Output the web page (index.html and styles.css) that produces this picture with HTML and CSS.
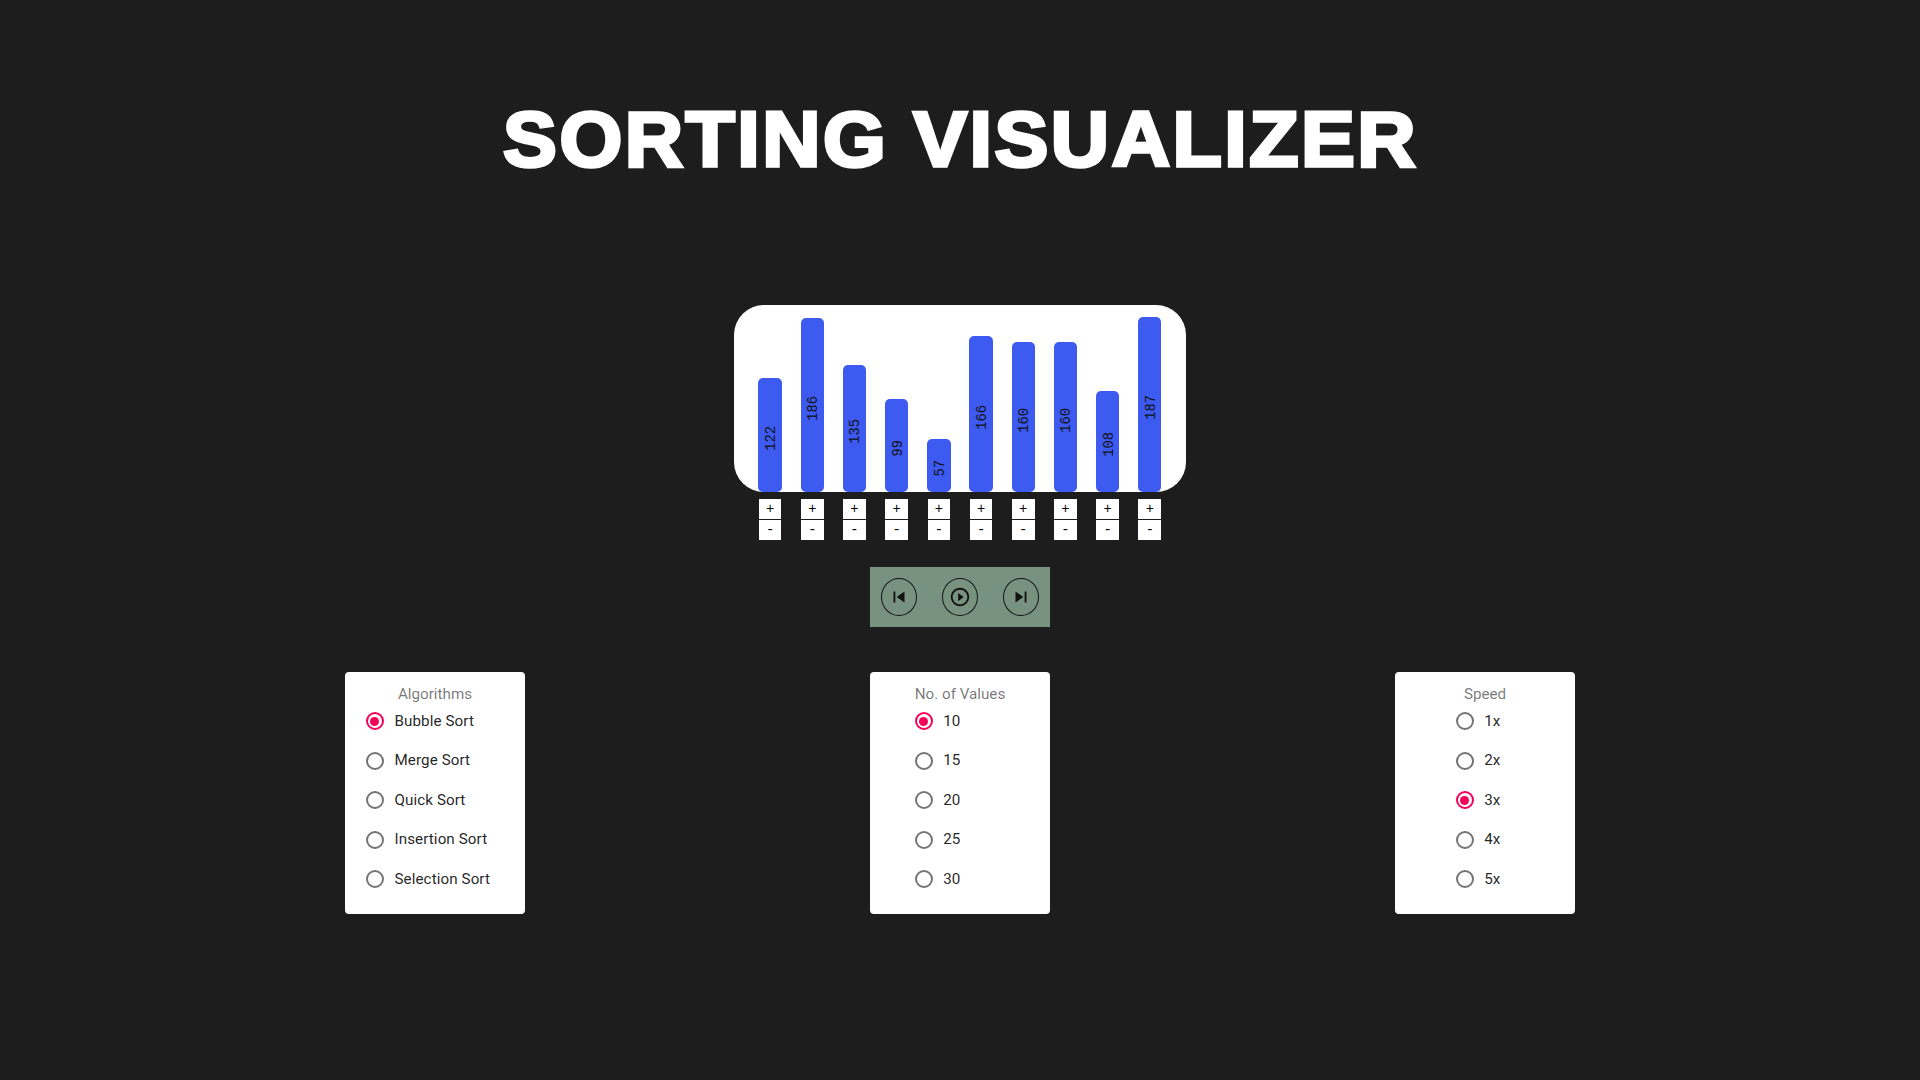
FILE: index.html
```html
<!DOCTYPE html>
<html lang="en">
<head>
<meta charset="utf-8">
<title>Sorting Visualizer</title>
<link rel="stylesheet" href="styles.css">
</head>
<body>
<main class="page">
  <h1 class="title">SORTING VISUALIZER</h1>
  <section class="chart">
    <div class="bar h122"><span class="val">122</span></div>
    <div class="bar h186"><span class="val">186</span></div>
    <div class="bar h135"><span class="val">135</span></div>
    <div class="bar h99"><span class="val">99</span></div>
    <div class="bar h57"><span class="val">57</span></div>
    <div class="bar h166"><span class="val">166</span></div>
    <div class="bar h160"><span class="val">160</span></div>
    <div class="bar h160"><span class="val">160</span></div>
    <div class="bar h108"><span class="val">108</span></div>
    <div class="bar h187"><span class="val">187</span></div>
  </section>
  <section class="steppers">
    <div class="stepper"><button class="step">+</button><button class="step">-</button></div>
    <div class="stepper"><button class="step">+</button><button class="step">-</button></div>
    <div class="stepper"><button class="step">+</button><button class="step">-</button></div>
    <div class="stepper"><button class="step">+</button><button class="step">-</button></div>
    <div class="stepper"><button class="step">+</button><button class="step">-</button></div>
    <div class="stepper"><button class="step">+</button><button class="step">-</button></div>
    <div class="stepper"><button class="step">+</button><button class="step">-</button></div>
    <div class="stepper"><button class="step">+</button><button class="step">-</button></div>
    <div class="stepper"><button class="step">+</button><button class="step">-</button></div>
    <div class="stepper"><button class="step">+</button><button class="step">-</button></div>
  </section>
  <section class="controls">
    <button class="ctl" aria-label="Previous"><svg viewBox="0 0 24 24" class="ico"><path d="M6 6h2v12H6zm3.5 6 8.5 6V6z"/></svg></button>
    <button class="ctl" aria-label="Play"><svg viewBox="0 0 24 24" class="ico play"><path d="M10 16.5l6-4.5-6-4.5v9zM12 2C6.48 2 2 6.48 2 12s4.48 10 10 10 10-4.48 10-10S17.52 2 12 2zm0 18c-4.41 0-8-3.59-8-8s3.59-8 8-8 8 3.59 8 8-3.59 8-8 8z"/></svg></button>
    <button class="ctl" aria-label="Next"><svg viewBox="0 0 24 24" class="ico"><path d="M6 18l8.5-6L6 6v12zM16 6v12h2V6h-2z"/></svg></button>
  </section>
  <section class="cards">
    <div class="card">
      <div class="form">
        <div class="legend">Algorithms</div>
        <div class="options">
          <label class="opt on"><span class="radio"></span>Bubble Sort</label>
          <label class="opt"><span class="radio"></span>Merge Sort</label>
          <label class="opt"><span class="radio"></span>Quick Sort</label>
          <label class="opt"><span class="radio"></span>Insertion Sort</label>
          <label class="opt"><span class="radio"></span>Selection Sort</label>
        </div>
      </div>
    </div>
    <div class="card">
      <div class="form">
        <div class="legend">No. of Values</div>
        <div class="options">
          <label class="opt on"><span class="radio"></span>10</label>
          <label class="opt"><span class="radio"></span>15</label>
          <label class="opt"><span class="radio"></span>20</label>
          <label class="opt"><span class="radio"></span>25</label>
          <label class="opt"><span class="radio"></span>30</label>
        </div>
      </div>
    </div>
    <div class="card">
      <div class="form">
        <div class="legend">Speed</div>
        <div class="options">
          <label class="opt"><span class="radio"></span>1x</label>
          <label class="opt"><span class="radio"></span>2x</label>
          <label class="opt on"><span class="radio"></span>3x</label>
          <label class="opt"><span class="radio"></span>4x</label>
          <label class="opt"><span class="radio"></span>5x</label>
        </div>
      </div>
    </div>
  </section>
</main>
</body>
</html>
```
FILE: styles.css
```css
* { box-sizing: border-box; }
html, body { margin: 0; height: 100%; }
body { background: #1d1d1d; font-family: Roboto, sans-serif; }
.page { display: flex; flex-direction: column; align-items: center; height: 1080px; padding-top: 97px; }
.title { margin: 0; height: 82px; padding-left: 2px; font: 900 77px/84px "Liberation Sans", Arial, sans-serif; color: #fff; -webkit-text-stroke: 3.4px #fff; letter-spacing: 2.4px; white-space: nowrap; transform: scaleX(1.048); }
.chart { margin-top: 126px; width: 452px; height: 187px; background: #fff; border-radius: 30px; padding: 0 24.4px; display: grid; grid-template-columns: repeat(10, 23.4px); column-gap: 18.8px; align-items: end; }
.bar { background: #3d5af1; border-radius: 5px; display: flex; align-items: center; justify-content: center; }
.h122 { height: 114px; } .h186 { height: 174px; } .h135 { height: 127px; } .h99 { height: 93px; } .h57 { height: 53px; }
.h166 { height: 156px; } .h160 { height: 150px; } .h108 { height: 101px; } .h187 { height: 175px; }
.val { writing-mode: vertical-rl; transform: translateX(2px) rotate(180deg); font: 13.8px/16px "Liberation Mono", monospace; color: #111; padding-bottom: 6px; }
.steppers { margin-top: 7px; width: 452px; padding: 0 24.4px; display: grid; grid-template-columns: repeat(10, 23.4px); column-gap: 18.8px; }
.stepper { display: flex; flex-direction: column; gap: 1px; align-items: stretch; padding: 0 .4px; }
.step { border: 0; padding: 2px 0 0; margin: 0; height: 20px; background: #fff; color: #000; font: 13.8px/18px "Liberation Mono", monospace; }
.controls { margin-top: 27px; width: 180px; height: 60px; background: #77937f; display: flex; align-items: center; justify-content: space-between; padding: 0 11px; }
.ctl { width: 36px; height: 38px; border: 1px solid #111; border-radius: 50%; background: transparent; padding: 0; display: flex; align-items: center; justify-content: center; }
.ico { width: 22px; height: 22px; fill: #111; display: block; flex: none; }
.cards { margin-top: 45px; width: 1230px; display: flex; justify-content: space-between; }
.card { width: 180px; height: 242px; background: #fff; border-radius: 4px; padding-top: 12px; display: flex; justify-content: center; align-items: flex-start; }
.form { width: fit-content; }
.legend { text-align: center; font-size: 15.2px; line-height: 20px; color: rgba(0,0,0,.54); white-space: nowrap; }
.options { display: flex; flex-direction: column; gap: 18.5px; margin-top: 6.5px; }
.opt { display: flex; align-items: center; gap: 10.5px; padding-right: 14px; font-size: 15.2px; letter-spacing: .08px; line-height: 21px; color: rgba(0,0,0,.87); white-space: nowrap; }
.radio { width: 18px; height: 18px; border: 2px solid #757575; border-radius: 50%; position: relative; flex: none; }
.opt.on .radio { border-color: #f50057; }
.opt.on .radio::after { content: ""; position: absolute; inset: 2.5px; background: #f50057; border-radius: 50%; }
```
